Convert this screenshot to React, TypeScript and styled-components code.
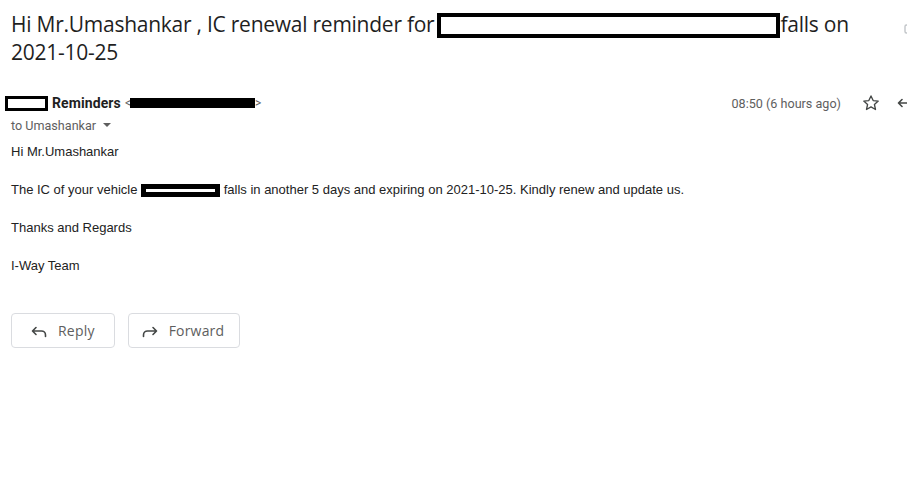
import styled, { createGlobalStyle } from 'styled-components'

const GlobalStyle = createGlobalStyle`
  body {
    margin: 0;
    background: #fff;
    overflow: hidden;
  }
`

export default function App() {
  return (
    <>
      <GlobalStyle />
      <Page>
        <TitleRow>
          <Title>
            <span>Hi Mr.Umashankar , IC renewal reminder for</span>
            <TitleRedaction />
            <span>falls on</span>
            <br />
            <span>2021-10-25</span>
          </Title>
          <EdgeIcon>
            <PrintIcon />
          </EdgeIcon>
        </TitleRow>

        <SenderRow>
          <NameRedaction />
          <SenderName>Reminders</SenderName>
          <SenderMail>
            &lt;
            <MailRedaction />
            &gt;
          </SenderMail>
          <Meta>
            <Time>08:50 (6 hours ago)</Time>
            <IconButton>
              <StarIcon />
            </IconButton>
            <IconButton>
              <ReplyIcon />
            </IconButton>
          </Meta>
        </SenderRow>

        <ToLine>
          to Umashankar
          <Caret />
        </ToLine>

        <Body>
          <Para>Hi Mr.Umashankar</Para>
          <Para>
            The IC of your vehicle <PlateRedaction /> falls in another 5 days and expiring on
            2021-10-25. Kindly renew and update us.
          </Para>
          <Para>Thanks and Regards</Para>
          <Para>I-Way Team</Para>
        </Body>

        <Actions>
          <ActionButton $lead={17} $trail={19}>
            <ReplyIcon />
            Reply
          </ActionButton>
          <ActionButton $lead={11} $trail={15}>
            <ForwardIcon />
            Forward
          </ActionButton>
        </Actions>
      </Page>
    </>
  )
}

function ReplyIcon() {
  return (
    <svg width="20" height="20" viewBox="0 0 20 20" fill="none">
      <path
        d="M7 6.5 3.5 10 7 13.5M3.8 10H12.5a4 4 0 0 1 4 4v1.5"
        stroke="#444746"
        strokeWidth="1.6"
        strokeLinecap="round"
        strokeLinejoin="round"
      />
    </svg>
  )
}

function ForwardIcon() {
  return (
    <svg width="20" height="20" viewBox="0 0 20 20" fill="none">
      <path
        d="M13 6.5 16.5 10 13 13.5M16.2 10H7.5a4 4 0 0 0-4 4v1.5"
        stroke="#444746"
        strokeWidth="1.6"
        strokeLinecap="round"
        strokeLinejoin="round"
      />
    </svg>
  )
}

function StarIcon() {
  return (
    <svg width="20" height="20" viewBox="0 0 24 24" fill="none">
      <path
        d="M12 3.5l2.6 5.6 6.1.6-4.6 4.1 1.3 6-5.4-3.1-5.4 3.1 1.3-6-4.6-4.1 6.1-.6z"
        stroke="#444746"
        strokeWidth="1.6"
        strokeLinejoin="round"
      />
    </svg>
  )
}

function PrintIcon() {
  return (
    <svg width="20" height="20" viewBox="0 0 20 20" fill="none">
      <rect x="2" y="7" width="16" height="8" rx="1.5" stroke="#9aa0a6" strokeWidth="1.4" />
      <path d="M6 7V3h8v4M6 12h8v5H6z" stroke="#9aa0a6" strokeWidth="1.4" />
    </svg>
  )
}

const Page = styled.div`
  width: 940px;
  padding: 10px 0 0 11px;
  box-sizing: border-box;
  font-family: Roboto, 'Liberation Sans', Arial, sans-serif;
  color: #222;
`

const TitleRow = styled.div`
  position: relative;
  width: 896px;
`

const Title = styled.h2`
  margin: 0;
  width: 860px;
  font-family: 'Open Sans', Roboto, sans-serif;
  font-size: 21px;
  font-weight: 400;
  line-height: 28px;
  color: #1f1f1f;
  letter-spacing: -0.25px;
`

const EdgeIcon = styled.span`
  position: absolute;
  right: -16px;
  top: 8px;
  display: flex;
  opacity: 0.6;
`

const TitleRedaction = styled.span`
  display: inline-block;
  width: 343px;
  height: 25px;
  margin-left: 3px;
  vertical-align: -6px;
  box-sizing: border-box;
  border: 4px solid #000;
  background: #fff;
`

const SenderRow = styled.div`
  display: flex;
  align-items: center;
  height: 20px;
  margin: 27px 0 0 -6px;
`

const NameRedaction = styled.span`
  width: 43px;
  height: 15px;
  box-sizing: border-box;
  border: 3px solid #000;
  background: #fff;
`

const SenderName = styled.span`
  margin-left: 4px;
  font-size: 14px;
  font-weight: 700;
  color: #1f1f1f;
  letter-spacing: 0.1px;
`

const SenderMail = styled.span`
  display: flex;
  align-items: center;
  margin-left: 4px;
  font-size: 12px;
  color: #5e5e5e;
`

const MailRedaction = styled.span`
  width: 125px;
  height: 10px;
  margin-left: -1px;
  background: #000;
`

const Meta = styled.div`
  display: flex;
  align-items: center;
  margin-left: auto;
  margin-right: 11px;
`

const Time = styled.span`
  font-size: 12.6px;
  color: #5e5e5e;
  margin-right: 20px;
`

const IconButton = styled.span`
  display: flex;
  width: 20px;
  height: 20px;
  margin-right: 14px;
`

const ToLine = styled.div`
  display: flex;
  align-items: center;
  height: 16px;
  margin-top: 4px;
  font-size: 12.6px;
  color: #5e5e5e;
`

const Caret = styled.span`
  width: 0;
  height: 0;
  margin-left: 7px;
  border-left: 4px solid transparent;
  border-right: 4px solid transparent;
  border-top: 4px solid #5e5e5e;
`

const Body = styled.div`
  display: flex;
  flex-direction: column;
  gap: 22px;
  margin-top: 11px;
  font-family: 'Liberation Sans', Arial, sans-serif;
  font-size: 13px;
  color: #222;
`

const Para = styled.p`
  margin: 0;
  line-height: 16px;
`

const PlateRedaction = styled.span`
  display: inline-flex;
  align-items: center;
  justify-content: center;
  width: 79px;
  height: 13px;
  vertical-align: top;
  transform: translateY(2px);
  background: #000;

  &::after {
    content: '';
    width: 69px;
    height: 3px;
    background: #fff;
  }
`

const Actions = styled.div`
  display: flex;
  gap: 13px;
  margin-top: 39px;
`

const ActionButton = styled.button<{ $lead: number; $trail: number }>`
  display: flex;
  align-items: center;
  gap: 9px;
  height: 35px;
  padding: 0 ${p => p.$trail}px 0 ${p => p.$lead}px;
  border: 1px solid #dadce0;
  border-radius: 4px;
  background: #fff;
  font-family: 'Open Sans', Roboto, sans-serif;
  font-size: 14px;
  font-weight: 500;
  color: #5e5e5e;
  letter-spacing: 0.2px;
`
